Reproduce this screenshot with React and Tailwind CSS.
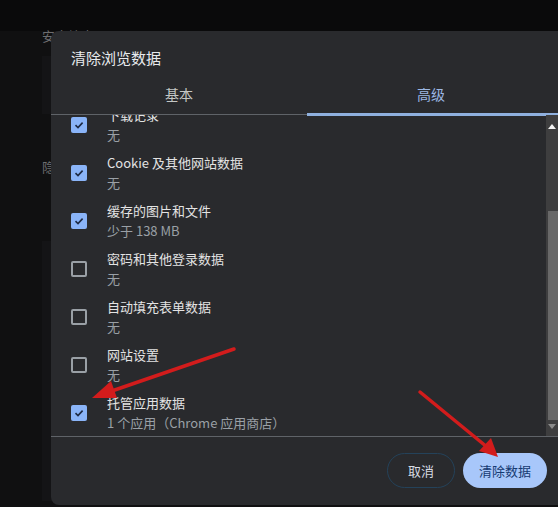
import React from 'react';

const items = [
  { label: '下载记录', sub: '无', checked: true },
  { label: 'Cookie 及其他网站数据', sub: '无', checked: true },
  { label: '缓存的图片和文件', sub: '少于 138 MB', checked: true },
  { label: '密码和其他登录数据', sub: '无', checked: false },
  { label: '自动填充表单数据', sub: '无', checked: false },
  { label: '网站设置', sub: '无', checked: false },
  { label: '托管应用数据', sub: '1 个应用（Chrome 应用商店）', checked: true },
];

function Checkbox({ checked }) {
  if (checked) {
    return (
      <div className="w-4 h-4 rounded-[2px] bg-[#8ab4f8] flex items-center justify-center shrink-0">
        <svg width="12" height="12" viewBox="0 0 12 12">
          <path d="M2.5 6.2 L5 8.6 L9.6 3.6" fill="none" stroke="#1d2a44" strokeWidth="1.6" />
        </svg>
      </div>
    );
  }
  return <div className="w-4 h-4 rounded-[2px] border-2 border-[#9aa0a6] shrink-0" />;
}

export default function App() {
  return (
    <div
      className="relative w-[558px] h-[507px] overflow-hidden bg-[#101011]"
      style={{ fontFamily: '"Noto Sans CJK SC", "Noto Sans", sans-serif' }}
    >
      {/* page behind the dialog */}
      <div className="h-[31px] bg-[#0a0a0b]" />
      <div className="pl-[42px]">
        <div className="-mt-[5px] text-[13px] leading-5 text-[#6d6d6f]">安全检查</div>
        <div className="mt-[10px] h-[58px] w-[100px] bg-[#141416]" />
        <div className="mt-[43px] text-[13px] leading-5 text-[#6d6d6f]">隐私和安全</div>
        <div className="mt-[64px] h-[260px] w-[100px] bg-[#141416]" />
      </div>

      {/* dialog */}
      <div className="absolute left-[51px] top-[31px] right-0 h-[474px] bg-[#292a2d] rounded-l-[8px] flex flex-col">
        <div className="h-[44px] pl-5 pt-[17px] text-[15px] leading-5 text-[#e8eaed]">清除浏览数据</div>
        <div className="flex h-[40px] relative border-b border-[#5f6368]">
          <div className="w-[256px] flex items-center justify-center text-[14px] text-[#c4c7c5]">基本</div>
          <div className="flex-1 flex items-center justify-center text-[14px] text-[#9cb8e4] border-b-[3px] border-[#8fb0de] -mb-[2px]">
            <span className="pr-[3px]">高级</span>
          </div>
        </div>

        <div className="relative h-[321px] flex overflow-hidden">
          <div className="flex-1 pl-5 -mt-[14px]">
            {items.map((it, i) => (
              <div key={i} className="h-12 flex items-center gap-5">
                <Checkbox checked={it.checked} />
                <div className="text-[13px] leading-5">
                  <div className="text-[#e3e3e3]">{it.label}</div>
                  <div className="text-[#9aa0a6]">{it.sub}</div>
                </div>
              </div>
            ))}
          </div>
          {/* scrollbar */}
          <div className="w-[12px] bg-[#3e3e3f] flex flex-col items-end">
            <div className="h-[17px] w-full flex items-end justify-center pb-[3px]">
              <svg width="8" height="5" viewBox="0 0 8 5"><path d="M0 5 L4 0 L8 5 Z" fill="#f2f2f2" /></svg>
            </div>
            <div className="mt-[79px] h-[209px] w-[10px] bg-[#686868]" />
            <div className="h-[12px] w-full flex items-center justify-center">
              <svg width="8" height="5" viewBox="0 0 8 5"><path d="M0 0 L8 0 L4 5 Z" fill="#8a8a8a" /></svg>
            </div>
          </div>
        </div>

        <div className="border-t border-[#5f6368] flex-1 flex justify-end items-start pt-[16px] pr-[11px] gap-2">
          <button className="h-[35px] w-[68px] rounded-full border border-[#24425a] text-[13px] text-[#d6dbe2]">取消</button>
          <button className="h-[35px] w-[84px] rounded-full bg-[#a8c7fa] text-[13px] text-[#163a72]">清除数据</button>
        </div>
      </div>

      {/* red annotation arrows */}
      <svg className="absolute left-0 top-0 pointer-events-none" width="558" height="507">
        <line x1="234" y1="349" x2="106" y2="393" stroke="#d21c1c" strokeWidth="3.5" strokeLinecap="round" />
        <polygon points="92,398 111,381 117,398" fill="#d21c1c" />
        <line x1="420" y1="392" x2="487" y2="447" stroke="#d21c1c" strokeWidth="3.5" strokeLinecap="round" />
        <polygon points="498,457 479,451 491,438" fill="#d21c1c" />
      </svg>
    </div>
  );
}
